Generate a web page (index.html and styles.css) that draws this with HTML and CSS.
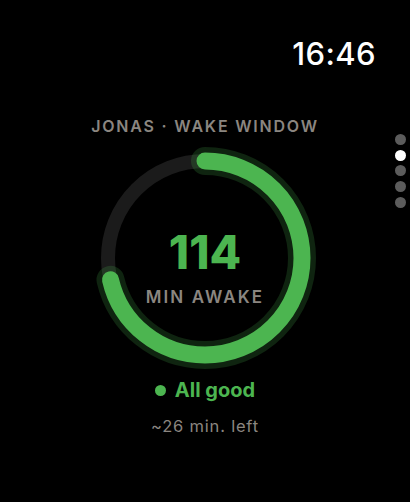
FILE: index.html
```html
<!DOCTYPE html>
<html lang="en">
<head>
<meta charset="utf-8">
<title>Wake Window</title>
<link rel="stylesheet" href="styles.css">
</head>
<body>
<div class="screen">
  <header class="status">
    <span class="time">16:46</span>
  </header>
  <nav class="pager" aria-label="Pages">
    <span class="dot"></span>
    <span class="dot active"></span>
    <span class="dot"></span>
    <span class="dot"></span>
    <span class="dot"></span>
  </nav>
  <main class="main">
    <div class="title">JONAS · WAKE WINDOW</div>
    <div class="ring">
      <svg class="ring-svg" width="230" height="230" viewBox="0 0 230 230" aria-hidden="true">
        <circle class="track" cx="115" cy="115" r="97"/>
        <circle class="glow" cx="115" cy="115" r="97" stroke-dasharray="434.3 609.5" transform="rotate(-90 115 115)"/>
        <circle class="bar" cx="115" cy="115" r="97" stroke-dasharray="434.3 609.5" transform="rotate(-90 115 115)"/>
      </svg>
      <div class="ring-label">
        <div class="value">114</div>
        <div class="unit">MIN AWAKE</div>
      </div>
    </div>
    <div class="state"><span class="state-dot"></span>All good</div>
    <div class="left">~26 min. left</div>
  </main>
</div>
</body>
</html>
```
FILE: styles.css
```css
html, body {
  margin: 0;
  padding: 0;
  background: #000;
}
.screen {
  position: relative;
  width: 410px;
  height: 502px;
  overflow: hidden;
  background: #000;
  font-family: Inter, "Liberation Sans", sans-serif;
}
.status {
  display: flex;
  justify-content: flex-end;
  padding: 36px 34px 0 0;
  height: 40px;
}
.time {
  color: #fff;
  font-size: 31px;
  font-weight: 500;
  line-height: 36px;
  letter-spacing: 0.4px;
}
.pager {
  position: absolute;
  right: 4px;
  top: 134px;
  display: flex;
  flex-direction: column;
  gap: 4.7px;
}
.dot {
  width: 11px;
  height: 11px;
  border-radius: 50%;
  background: #5c5c5c;
}
.dot.active {
  background: #fff;
}
.main {
  display: flex;
  flex-direction: column;
  align-items: center;
}
.title {
  margin-top: 40px;
  color: #8b8680;
  font-size: 16px;
  font-weight: 600;
  letter-spacing: 1.8px;
  line-height: 20px;
}
.ring {
  margin-top: 7px;
  width: 230px;
  height: 230px;
  display: grid;
  place-items: center;
}
.ring > * {
  grid-area: 1 / 1;
}
.track {
  fill: none;
  stroke: #1b1b1b;
  stroke-width: 14;
}
.glow {
  fill: none;
  stroke: #4cb550;
  stroke-opacity: 0.2;
  stroke-width: 28;
  stroke-linecap: round;
}
.bar {
  fill: none;
  stroke: #4cb550;
  stroke-width: 17;
  stroke-linecap: round;
}
.ring-label {
  display: flex;
  flex-direction: column;
  align-items: center;
  margin-top: 18px;
}
.value {
  color: #4cb550;
  font-size: 46px;
  font-weight: 800;
  line-height: 50px;
  letter-spacing: 0;
}
.unit {
  margin-top: 10px;
  color: #8b8680;
  font-size: 17px;
  font-weight: 600;
  letter-spacing: 2.1px;
  line-height: 20px;
}
.state {
  margin-top: 4px;
  display: flex;
  align-items: center;
  gap: 9px;
  color: #4cb550;
  font-size: 20px;
  font-weight: 700;
  line-height: 26px;
}
.state-dot {
  width: 11px;
  height: 11px;
  border-radius: 50%;
  background: #4cb550;
}
.left {
  margin-top: 13px;
  color: #8b8680;
  font-size: 16.5px;
  line-height: 20px;
  letter-spacing: 0.8px;
}
```
